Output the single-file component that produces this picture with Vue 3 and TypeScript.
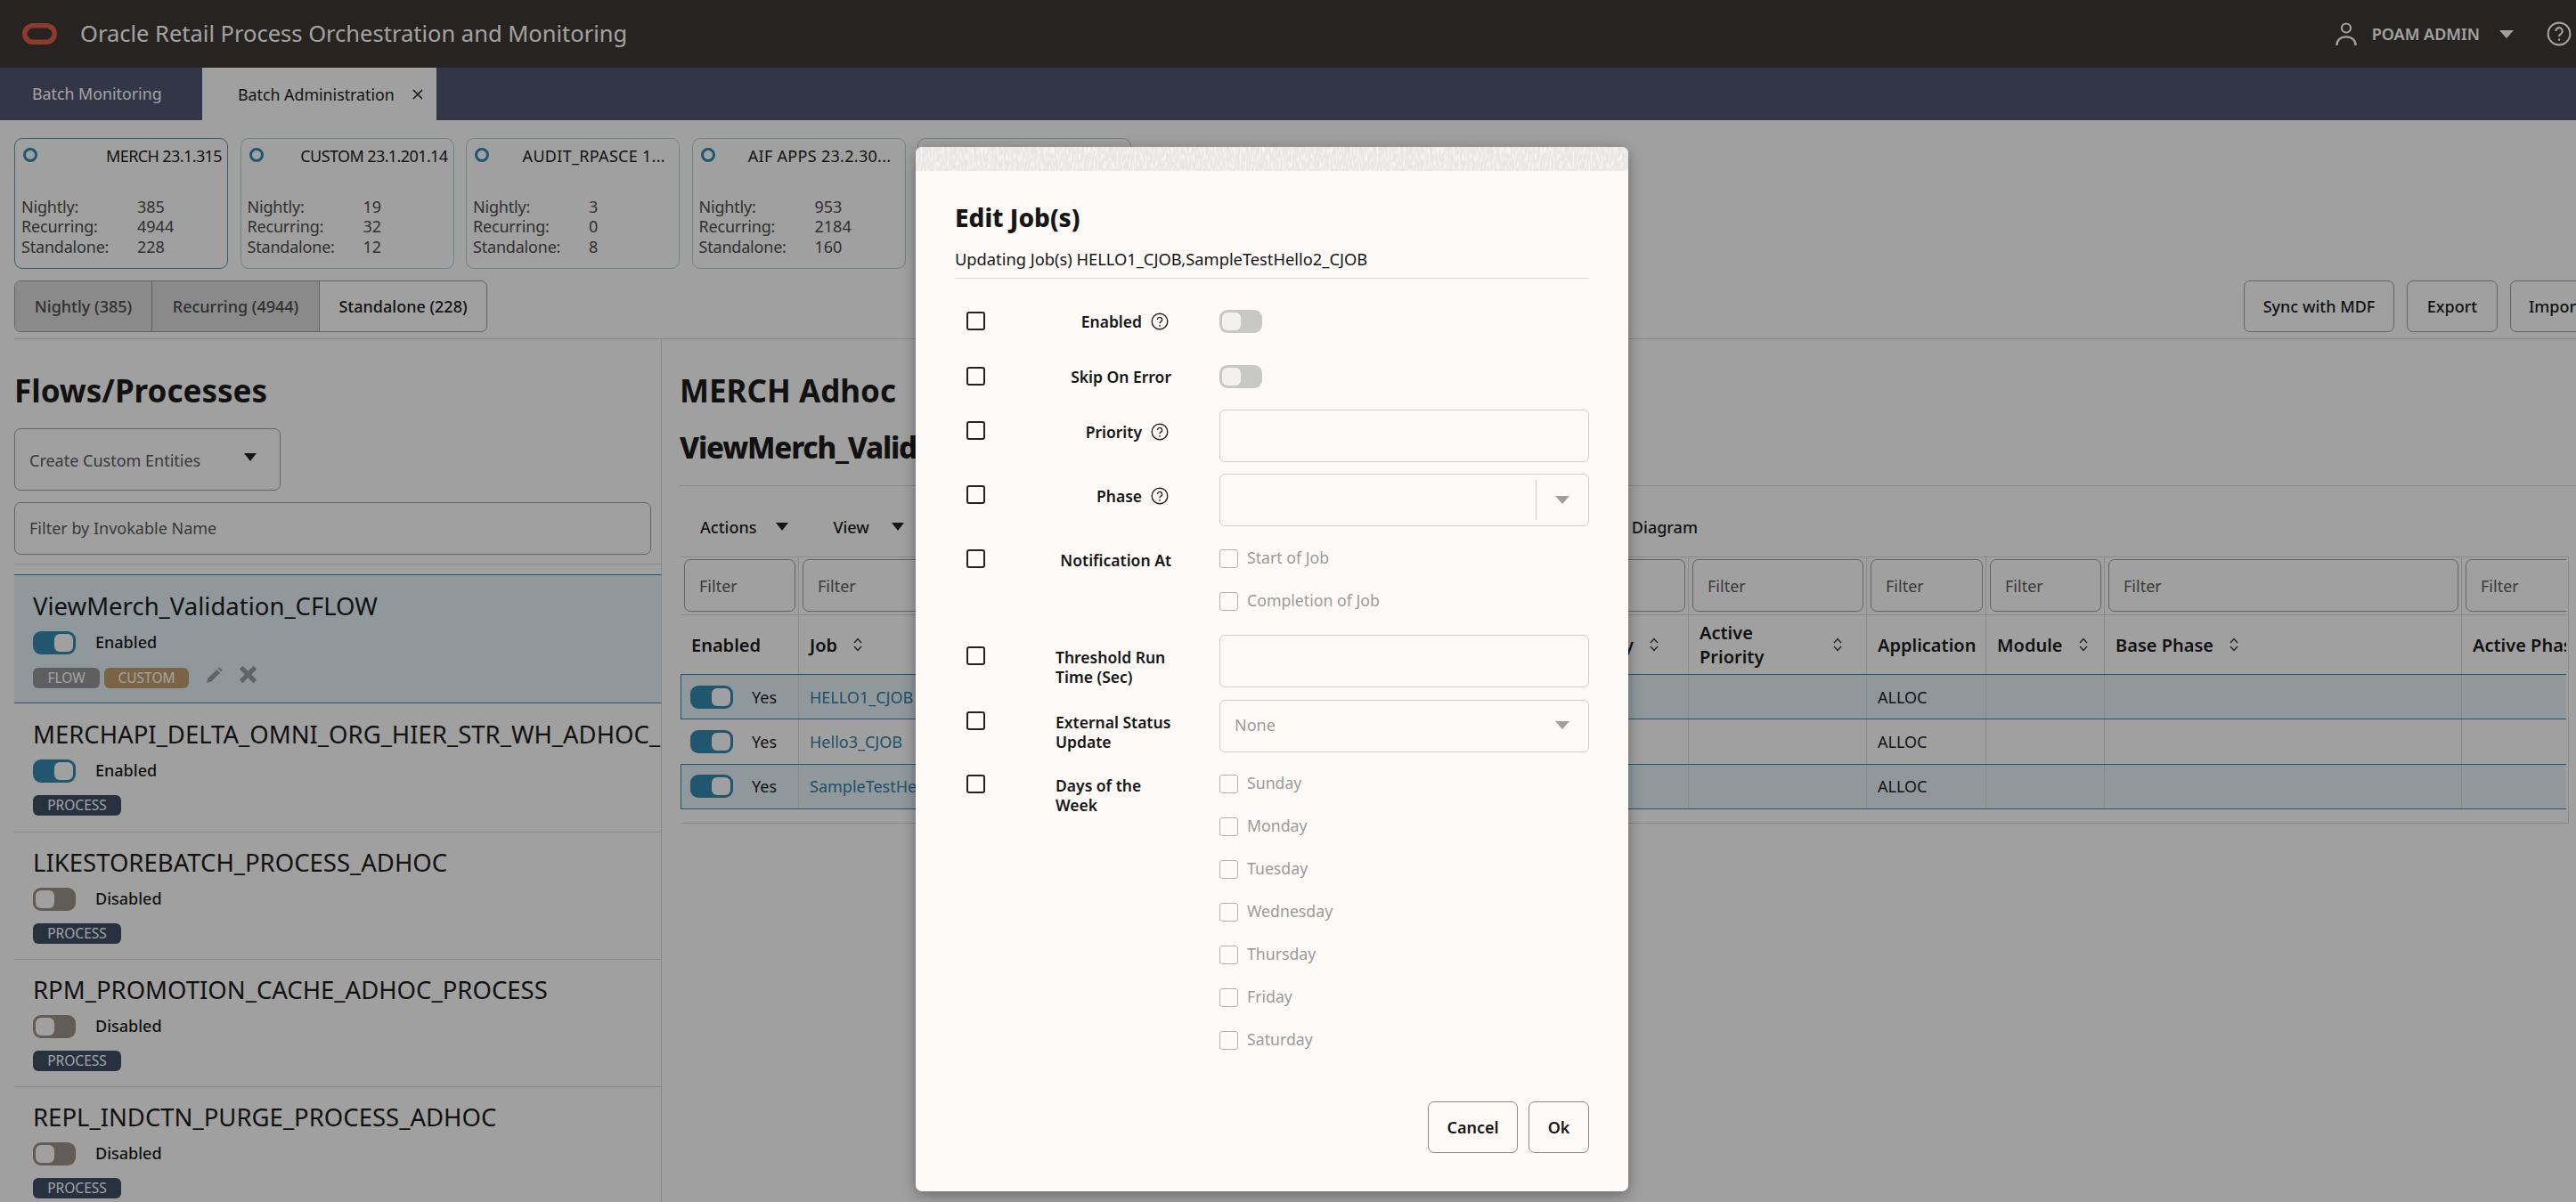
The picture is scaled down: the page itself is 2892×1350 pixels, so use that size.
<script setup lang="ts">
const cards = [
  { name: 'MERCH 23.1.315', nightly: 385, recurring: 4944, standalone: 228, active: true },
  { name: 'CUSTOM 23.1.201.14', nightly: 19, recurring: 32, standalone: 12, active: false },
  { name: 'AUDIT_RPASCE 1...', nightly: 3, recurring: 0, standalone: 8, active: false, cut: true },
  { name: 'AIF APPS 23.2.30...', nightly: 953, recurring: 2184, standalone: 160, active: false, cut: true },
]

const flows = [
  { name: 'ViewMerch_Validation_CFLOW', on: true, selected: true },
  { name: 'MERCHAPI_DELTA_OMNI_ORG_HIER_STR_WH_ADHOC_PROCESS', on: true, selected: false },
  { name: 'LIKESTOREBATCH_PROCESS_ADHOC', on: false, selected: false },
  { name: 'RPM_PROMOTION_CACHE_ADHOC_PROCESS', on: false, selected: false },
  { name: 'REPL_INDCTN_PURGE_PROCESS_ADHOC', on: false, selected: false },
]

const jobs = [
  { name: 'HELLO1_CJOB', selected: true },
  { name: 'Hello3_CJOB', selected: false },
  { name: 'SampleTestHello2_CJOB', selected: true },
]

const days = ['Sunday', 'Monday', 'Tuesday', 'Wednesday', 'Thursday', 'Friday', 'Saturday']
const columnCount = 9
</script>

<template>
  <div class="app">
    <header class="topbar">
      <svg class="logo" viewBox="0 0 39 24" width="39" height="24">
        <rect x="2.75" y="2.75" width="33.5" height="18.5" rx="9.25" fill="none" stroke="#e05c48" stroke-width="5.5" />
      </svg>
      <span class="app-title">Oracle Retail Process Orchestration and Monitoring</span>
      <div class="user">
        <svg viewBox="0 0 24 26" width="24" height="26" fill="none" stroke="#fff" stroke-width="2.2">
          <circle cx="12" cy="6.5" r="5" />
          <path d="M1.4 26c0-6 4.5-9.6 10.6-9.6S22.6 20 22.6 26" />
        </svg>
        <span class="user-name">POAM ADMIN</span>
        <span class="caret caret-user"></span>
      </div>
      <svg class="top-help" viewBox="0 0 24 24" width="28" height="28" fill="none" stroke="#fff" stroke-width="1.8">
        <circle cx="12" cy="12" r="10.6" />
        <path d="M8.8 9.4a3.2 3.2 0 1 1 4.9 2.7c-1.1.7-1.7 1.3-1.7 2.5" />
        <circle cx="12" cy="17.6" r="1" fill="#fff" stroke="none" />
      </svg>
    </header>

    <nav class="tabbar">
      <div class="tab">Batch Monitoring</div>
      <div class="tab tab-active">
        Batch Administration
        <svg viewBox="0 0 12 12" width="12" height="12" stroke="#1c1c1c" stroke-width="1.5"><path d="M1 1l10 10M11 1L1 11" /></svg>
      </div>
    </nav>

    <section class="cards">
      <article v-for="card in cards" :key="card.name" class="card" :class="{ 'card-active': card.active }">
        <div class="card-head">
          <span class="ring"></span>
          <span class="card-title" :class="{ cut: card.cut }">{{ card.name }}</span>
        </div>
        <dl class="stats">
          <dt>Nightly:</dt><dd>{{ card.nightly }}</dd>
          <dt>Recurring:</dt><dd>{{ card.recurring }}</dd>
          <dt>Standalone:</dt><dd>{{ card.standalone }}</dd>
        </dl>
      </article>
      <article class="card"></article>
    </section>

    <section class="actions">
      <div class="segments">
        <button class="seg seg-off seg-1">Nightly (385)</button>
        <button class="seg seg-off seg-2">Recurring (4944)</button>
        <button class="seg seg-3">Standalone (228)</button>
      </div>
      <div class="action-btns">
        <button class="btn btn-sync">Sync with MDF</button>
        <button class="btn btn-export">Export</button>
        <button class="btn btn-import">Import</button>
      </div>
    </section>

    <div class="split">
      <aside class="left">
        <h2 class="heading">Flows/Processes</h2>
        <div class="create-select">
          <span>Create Custom Entities</span>
          <span class="caret caret-dark"></span>
        </div>
        <div class="name-filter">Filter by Invokable Name</div>
        <div class="left-rule"></div>
        <div
          v-for="flow in flows"
          :key="flow.name"
          class="flow"
          :class="{ 'flow-selected': flow.selected }"
        >
          <div class="flow-name">{{ flow.name }}</div>
          <div class="flow-state">
            <span class="toggle" :class="flow.on ? 'toggle-on' : 'toggle-off'"><i></i></span>
            <span class="flow-state-text">{{ flow.on ? 'Enabled' : 'Disabled' }}</span>
          </div>
          <div class="flow-tags">
            <template v-if="flow.selected">
              <span class="tag tag-flow">FLOW</span>
              <span class="tag tag-custom">CUSTOM</span>
              <svg class="edit-icon" viewBox="0 0 18 18" width="18" height="18" fill="#969fa3">
                <path d="M0 18l1.6-5.4L11.3 2.9l3.8 3.8-9.7 9.7z" />
                <path d="M12.4 1.8L14 .2l3.8 3.8-1.6 1.6z" />
              </svg>
              <svg class="del-icon" viewBox="0 0 18 18" width="19" height="19" stroke="#969fa3" stroke-width="5"><path d="M1.5 1.5l15 15M16.5 1.5l-15 15" /></svg>
            </template>
            <span v-else class="tag tag-process">PROCESS</span>
          </div>
        </div>
      </aside>

      <main class="right">
        <h2 class="heading">MERCH Adhoc</h2>
        <h2 class="heading heading-sub">ViewMerch_Validation_CFLOW</h2>
        <div class="toolbar">
          <span class="tool">Actions <span class="caret caret-dark"></span></span>
          <span class="tool tool-view">View <span class="caret caret-dark"></span></span>
          <span class="tool tool-end">Diagram</span>
        </div>

        <div class="table">
          <div class="table-scroll">
            <div class="t-row t-filters">
              <div v-for="n in columnCount" :key="n" class="t-filter-cell">
                <div class="t-filter">Filter</div>
              </div>
            </div>
            <div class="t-row t-head">
              <div class="th">Enabled</div>
              <div class="th">Job <svg class="sort" viewBox="0 0 10 16" width="10" height="16"><path d="M1 6l4-4.5L9 6M1 10l4 4.5L9 10" /></svg></div>
              <div class="th"></div>
              <div class="th">Base Priority <svg class="sort" viewBox="0 0 10 16" width="10" height="16"><path d="M1 6l4-4.5L9 6M1 10l4 4.5L9 10" /></svg></div>
              <div class="th"><span class="th-wrap">Active Priority</span> <svg class="sort" viewBox="0 0 10 16" width="10" height="16"><path d="M1 6l4-4.5L9 6M1 10l4 4.5L9 10" /></svg></div>
              <div class="th">Application</div>
              <div class="th">Module <svg class="sort" viewBox="0 0 10 16" width="10" height="16"><path d="M1 6l4-4.5L9 6M1 10l4 4.5L9 10" /></svg></div>
              <div class="th">Base Phase <svg class="sort" viewBox="0 0 10 16" width="10" height="16"><path d="M1 6l4-4.5L9 6M1 10l4 4.5L9 10" /></svg></div>
              <div class="th th-nowrap">Active Phase</div>
            </div>
            <div
              v-for="job in jobs"
              :key="job.name"
              class="t-row t-body"
              :class="{ 'row-selected': job.selected }"
            >
              <div class="td td-enabled">
                <span class="toggle toggle-on"><i></i></span>
                <span>Yes</span>
              </div>
              <div class="td"><a class="job-link">{{ job.name }}</a></div>
              <div class="td"></div>
              <div class="td"></div>
              <div class="td"></div>
              <div class="td">ALLOC</div>
              <div class="td"></div>
              <div class="td"></div>
              <div class="td"></div>
            </div>
          </div>
        </div>
      </main>
    </div>

    <div class="overlay"></div>

    <div class="dialog">
      <svg class="dialog-strip" width="800" height="27">
        <filter id="strip-noise" x="0" y="0" width="100%" height="100%" color-interpolation-filters="sRGB">
          <feTurbulence type="fractalNoise" baseFrequency="0.5 0.12" numOctaves="2" seed="4" />
          <feColorMatrix type="matrix" values="0 0 0 0 1  0 0 0 0 1  0 0 0 0 1  2 0 0 0 -0.85" />
        </filter>
        <rect width="800" height="27" fill="#e9e7e5" />
        <rect width="800" height="27" filter="url(#strip-noise)" />
      </svg>
      <div class="dialog-body">
        <h3 class="dialog-title">Edit Job(s)</h3>
        <p class="dialog-sub">Updating Job(s) HELLO1_CJOB,SampleTestHello2_CJOB</p>

        <form class="form">
          <div class="f-row f-toggle">
            <span class="cb cb-strong"></span>
            <div class="f-label">Enabled
              <svg class="help" viewBox="0 0 20 20" width="20" height="20" fill="none" stroke="#222" stroke-width="1.4"><circle cx="10" cy="10" r="8.8" /><path d="M7.4 8a2.6 2.6 0 1 1 4 2.2c-.9.6-1.4 1.1-1.4 2.1" /><circle cx="10" cy="14.8" r=".9" fill="#222" stroke="none" /></svg>
            </div>
            <span class="toggle toggle-dim"><i></i></span>
          </div>
          <div class="f-row f-toggle mt36">
            <span class="cb cb-strong"></span>
            <div class="f-label f-end">Skip On Error</div>
            <span class="toggle toggle-dim"><i></i></span>
          </div>
          <div class="f-row f-field mt24">
            <span class="cb cb-strong"></span>
            <div class="f-label">Priority
              <svg class="help" viewBox="0 0 20 20" width="20" height="20" fill="none" stroke="#222" stroke-width="1.4"><circle cx="10" cy="10" r="8.8" /><path d="M7.4 8a2.6 2.6 0 1 1 4 2.2c-.9.6-1.4 1.1-1.4 2.1" /><circle cx="10" cy="14.8" r=".9" fill="#222" stroke="none" /></svg>
            </div>
            <div class="input"></div>
          </div>
          <div class="f-row f-field mt13">
            <span class="cb cb-strong"></span>
            <div class="f-label">Phase
              <svg class="help" viewBox="0 0 20 20" width="20" height="20" fill="none" stroke="#222" stroke-width="1.4"><circle cx="10" cy="10" r="8.8" /><path d="M7.4 8a2.6 2.6 0 1 1 4 2.2c-.9.6-1.4 1.1-1.4 2.1" /><circle cx="10" cy="14.8" r=".9" fill="#222" stroke="none" /></svg>
            </div>
            <div class="input input-combo">
              <span class="combo-sep"></span>
              <span class="caret caret-grey"></span>
            </div>
          </div>
          <div class="f-row f-list mt26">
            <span class="cb cb-strong"></span>
            <div class="f-label f-end">Notification At</div>
            <div class="check-list">
              <label class="check"><span class="cb"></span>Start of Job</label>
              <label class="check"><span class="cb"></span>Completion of Job</label>
            </div>
          </div>
          <div class="f-row f-field f-tall mt27">
            <span class="cb cb-strong"></span>
            <div class="f-label f-left">Threshold Run Time (Sec)</div>
            <div class="input"></div>
          </div>
          <div class="f-row f-field f-tall mt14">
            <span class="cb cb-strong"></span>
            <div class="f-label f-left">External Status Update</div>
            <div class="input input-select">
              <span>None</span>
              <span class="caret caret-grey"></span>
            </div>
          </div>
          <div class="f-row f-list mt25">
            <span class="cb cb-strong"></span>
            <div class="f-label f-left">Days of the Week</div>
            <div class="check-list">
              <label v-for="day in days" :key="day" class="check"><span class="cb"></span>{{ day }}</label>
            </div>
          </div>
        </form>

        <div class="dialog-foot">
          <button class="d-btn d-cancel">Cancel</button>
          <button class="d-btn d-ok">Ok</button>
        </div>
      </div>
    </div>
  </div>
</template>

<style>
html, body { margin: 0; padding: 0; background: #fcfcfc; }
</style>

<style scoped>
.app {
  position: relative;
  width: 2892px;
  height: 1350px;
  overflow: hidden;
  background: #fcfcfc;
  color: #1c1c1c;
  font-family: "Noto Sans", "Open Sans", Arial, sans-serif;
  font-size: 18px;
  display: flex;
  flex-direction: column;
}

/* top bars */
.topbar {
  flex: none;
  height: 76px;
  background: #3c3733;
  display: flex;
  align-items: center;
  padding-left: 25px;
  color: #fff;
}
.logo { flex: none; }
.app-title { margin: -3px 0 0 26px; font-size: 25.5px; }
.user { margin-left: auto; display: flex; align-items: center; }
.user-name { margin-left: 17px; font-size: 18px; font-weight: 600; }
.top-help { margin: 0 5px 0 37px; }

.caret { display: inline-block; width: 0; height: 0; border-left: 8px solid transparent; border-right: 8px solid transparent; border-top: 9px solid #333; }
.caret-user { margin-left: 22px; border-top-color: #fff; }
.caret-grey { border-top-color: #9f9f9f; }
.caret-dark { border-top-color: #222; border-left-width: 7.5px; border-right-width: 7.5px; }

.tabbar { flex: none; height: 59px; background: #4f5571; display: flex; color: #fff; font-size: 17.8px; }
.tab { width: 227px; padding-left: 36px; box-sizing: border-box; line-height: 58px; }
.tab-active {
  width: 263px;
  padding-left: 40px;
  background: #fcfcfc;
  color: #1c1c1c;
  display: flex;
  align-items: center;
  gap: 20px;
}

/* application cards */
.cards { flex: none; display: flex; gap: 13.5px; padding: 20px 0 0 16px; }
.card {
  flex: none;
  width: 240px;
  height: 147px;
  box-sizing: border-box;
  border: 1px solid #b5cdd6;
  border-radius: 9px;
  padding: 7px 6px 13px 7px;
  display: flex;
  flex-direction: column;
}
.card-active { border-color: #5c93ab; }
.card-head { display: flex; justify-content: space-between; align-items: flex-start; }
.ring {
  flex: none;
  width: 16px;
  height: 16px;
  box-sizing: border-box;
  margin: 3px 0 0 2px;
  border: 3.5px solid #3489ae;
  border-radius: 50%;
}
.card-title { line-height: 24px; white-space: nowrap; letter-spacing: -0.6px; }
.card-title.cut { padding-right: 9px; letter-spacing: 0.3px; }
.stats {
  margin: auto 0 0;
  display: grid;
  grid-template-columns: 130px 1fr;
  line-height: 22.5px;
  color: #4c4c4c;
}
.stats dt, .stats dd { margin: 0; }
.stats dt { letter-spacing: -0.2px; }

/* filter + action buttons */
.actions {
  flex: none;
  display: flex;
  justify-content: space-between;
  margin: 13px -28px 0 16px;
  padding-bottom: 7px;
  border-bottom: 1px solid #d9d9d9;
}
.segments { display: flex; height: 58px; box-sizing: border-box; border: 1px solid #9c9c9c; border-radius: 7px; overflow: hidden; }
.seg { border: 0; border-right: 1px solid #9c9c9c; background: transparent; font: inherit; padding: 0; color: #1c1c1c; font-weight: 500; }
.seg-off { background: #d9d9d9; color: #4c4c4c; }
.seg-1 { width: 154px; }
.seg-2 { width: 188px; }
.seg-3 { width: 187px; border-right: 0; }
.action-btns { display: flex; gap: 14px; }
.btn { height: 58px; border: 1px solid #9c9c9c; border-radius: 7px; background: transparent; font: inherit; font-weight: 500; color: #1c1c1c; padding: 0; }
.btn-sync { width: 169px; }
.btn-export { width: 102px; }
.btn-import { width: 102px; }

.split { flex: 1; min-height: 0; display: flex; }
.left {
  flex: none;
  width: 727px;
  box-sizing: border-box;
  margin-left: 16px;
  border-right: 1px solid #d9d9d9;
}
.heading { margin: 33px 0 0; font-size: 35px; line-height: 50px; font-weight: 700; color: #1c1c1c; white-space: nowrap; }
.heading-sub {
  margin-top: 14px;
  padding-bottom: 17px;
  border-bottom: 1px solid #d9d9d9;
  font-size: 33px;
  font-weight: 800;
  letter-spacing: -1.2px;
}

.create-select {
  width: 299px;
  height: 70px;
  box-sizing: border-box;
  margin-top: 17px;
  border: 1px solid #9c9c9c;
  border-radius: 7px;
  padding: 2px 26px 0 16px;
  display: flex;
  align-items: center;
  justify-content: space-between;
  color: #5a5a5a;
}
.create-select .caret { margin-top: -7px; }
.name-filter {
  width: 715px;
  height: 59px;
  box-sizing: border-box;
  margin-top: 13px;
  border: 1px solid #9c9c9c;
  border-radius: 7px;
  padding-left: 16px;
  line-height: 57px;
  color: #5a5a5a;
}
.left-rule { margin-top: 10px; height: 1px; background: #d9d9d9; margin-bottom: 11px; }

.flow {
  height: 143px;
  box-sizing: border-box;
  padding: 17px 0 0 21px;
  border-bottom: 1px solid #d9d9d9;
  white-space: nowrap;
  overflow: hidden;
}
.flow-selected {
  height: 145px;
  padding-top: 18px;
  margin-bottom: 1px;
  background: #e3f0f5;
  border-top: 1px solid #3a8aaf;
  border-bottom: 1px solid #3a8aaf;
}
.flow-selected + .flow { height: 144px; }
.flow-name { font-size: 27.5px; line-height: 34px; }
.flow-state { display: flex; align-items: center; gap: 22px; margin-top: 11px; font-weight: 500; }
.flow-state-text { margin-top: -2px; }
.flow-tags { display: flex; align-items: center; margin-top: 14px; }
.flow-selected .flow-tags { margin-top: 15px; }

.tag { height: 23px; border-radius: 6px; font-size: 15.5px; line-height: 22px; text-align: center; color: #fff; }
.tag-flow { width: 75px; background: #969696; }
.tag-custom { width: 95px; margin-left: 5px; background: #c29e6e; }
.tag-process { width: 99px; background: #3e4d65; }
.edit-icon { margin: -8px 0 0 20px; }
.del-icon { margin: -8px 0 0 19px; }

.toggle {
  flex: none;
  display: inline-flex;
  width: 48px;
  height: 26px;
  box-sizing: border-box;
  padding: 3px;
  border-radius: 9px;
}
.toggle i { display: block; width: 21px; height: 20px; border-radius: 6px; background: #fcfcfc; }
.toggle-on { background: #3489ae; justify-content: flex-end; }
.toggle-off { background: #9a918a; }
.toggle-dim { background: #c8c8c6; }
.toggle-dim i { background: #f2f1f0; }

/* right side */
.right { flex: 1; min-width: 0; padding-left: 20px; }
.toolbar {
  height: 79px;
  box-sizing: border-box;
  padding: 12px 0 0 23px;
  display: flex;
  align-items: center;
}
.tool { display: inline-flex; align-items: center; gap: 22px; font-weight: 500; }
.tool-view { margin-left: 50px; gap: 25px; }
.tool-end { margin-left: 817px; }

.table {
  width: 2120px;
  box-sizing: border-box;
  margin-left: 1px;
  padding: 0 2px 15px 0;
  border-right: 1px solid #d9d9d9;
  border-bottom: 1px solid #d9d9d9;
  border-top: 1px solid #d9d9d9;
}
.table-scroll { overflow: hidden; }
.t-row {
  display: grid;
  grid-template-columns: 133px 403px 398px 198px 200px 134px 133px 401px 200px;
  width: 2200px;
}
.t-filters { height: 64px; border-bottom: 1px solid #d9d9d9; }
.t-filter-cell { padding: 2px 3px 0 4px; border-right: 1px solid #d9d9d9; }
.t-filter {
  height: 59px;
  box-sizing: border-box;
  border: 1px solid #9c9c9c;
  border-radius: 7px;
  padding-left: 16px;
  line-height: 59px;
  color: #5a5a5a;
}
.t-head { height: 66px; }
.th {
  display: flex;
  align-items: center;
  gap: 18px;
  box-sizing: border-box;
  padding-left: 12px;
  border-right: 1px solid #d9d9d9;
  font-weight: 600;
  font-size: 20px;
  line-height: 27px;
  white-space: nowrap;
}
.th-wrap { width: 132px; white-space: normal; }
.sort { flex: none; fill: none; stroke: #333; stroke-width: 1.3; }

.t-body { height: 50.5px; box-sizing: border-box; border-bottom: 1px solid #3a8aaf; }
.t-head + .t-body { border-top: 1px solid #3a8aaf; height: 51px; }
.row-selected { background: #e3f0f5; }
.td {
  display: flex;
  align-items: center;
  box-sizing: border-box;
  padding-left: 12px;
  border-right: 1px solid #d9d9d9;
  white-space: nowrap;
  overflow: hidden;
}
.td-enabled { padding-left: 11px; gap: 21px; }
.row-selected .td-enabled { box-shadow: inset 1px 0 0 #3a8aaf; }
.job-link { color: #317fa5; }

/* modal */
.overlay { position: absolute; inset: 0; z-index: 10; background: rgba(0, 0, 0, 0.365); }

.dialog {
  position: absolute;
  z-index: 20;
  left: 1028px;
  top: 165px;
  width: 800px;
  height: 1173px;
  display: flex;
  flex-direction: column;
  overflow: hidden;
  border-radius: 7px;
  background: #fdfaf8;
  box-shadow: 0 4px 16px rgba(0, 0, 0, 0.35);
}
.dialog-strip { flex: none; display: block; }
.dialog-body {
  flex: 1;
  min-height: 0;
  display: flex;
  flex-direction: column;
  padding: 32px 44px 43px;
  color: #161616;
}
.dialog-title { margin: 0; font-size: 28px; line-height: 40px; font-weight: 800; }
.dialog-sub {
  margin: 14px 0 0;
  padding-bottom: 8px;
  border-bottom: 1px solid #dedcda;
  font-size: 18.3px;
  line-height: 26px;
  white-space: nowrap;
}

.form { margin-top: 35px; }
.f-row {
  display: grid;
  grid-template-columns: 113px 184px 415px;
  align-items: start;
}
.mt13 { margin-top: 13px; }
.mt14 { margin-top: 14px; }
.mt24 { margin-top: 24px; }
.mt25 { margin-top: 25px; }
.mt26 { margin-top: 26px; }
.mt27 { margin-top: 27px; }
.mt36 { margin-top: 36px; }

.cb {
  flex: none;
  display: block;
  width: 21px;
  height: 21px;
  box-sizing: border-box;
  border: 1.5px solid #b4b2b0;
  border-radius: 3px;
}
.cb-strong { margin-left: 13px; border: 2px solid #222; }
.f-toggle .cb-strong { margin-top: 2px; }
.f-field .cb-strong { margin-top: 13px; }

.f-label {
  width: 130px;
  box-sizing: border-box;
  font-weight: 600;
  line-height: 22px;
  font-size: 17.5px;
  display: flex;
  align-items: center;
  justify-content: flex-end;
  gap: 10px;
  white-space: nowrap;
}
.f-label.f-left { display: block; white-space: normal; }
.f-toggle .f-label { margin-top: 2px; }
.f-field .f-label { margin-top: 14px; }
.f-list .f-label { margin-top: 1px; }
.help { margin-right: 3px; }

.input {
  height: 59px;
  box-sizing: border-box;
  border: 1.5px solid #d0cecc;
  border-radius: 6px;
  display: flex;
  align-items: center;
}
.input-combo { justify-content: flex-end; padding-right: 21px; }
.combo-sep { height: 45px; width: 1px; background: #d0cecc; margin-right: 21px; }
.input-select { justify-content: space-between; padding: 0 21px 3px 16px; color: #9b9b9b; }

.check-list { display: flex; flex-direction: column; gap: 27px; }
.check { display: flex; align-items: flex-start; gap: 10px; height: 21px; line-height: 18px; color: #9b9b9b; font-size: 17.7px; }

.dialog-foot { margin-top: auto; display: flex; justify-content: flex-end; gap: 12px; }
.d-btn { height: 58px; border: 1px solid #8a8a8a; border-radius: 7px; background: transparent; font: inherit; font-weight: 600; color: #161616; padding: 0; }
.d-cancel { width: 101px; }
.d-ok { width: 68px; }
</style>
